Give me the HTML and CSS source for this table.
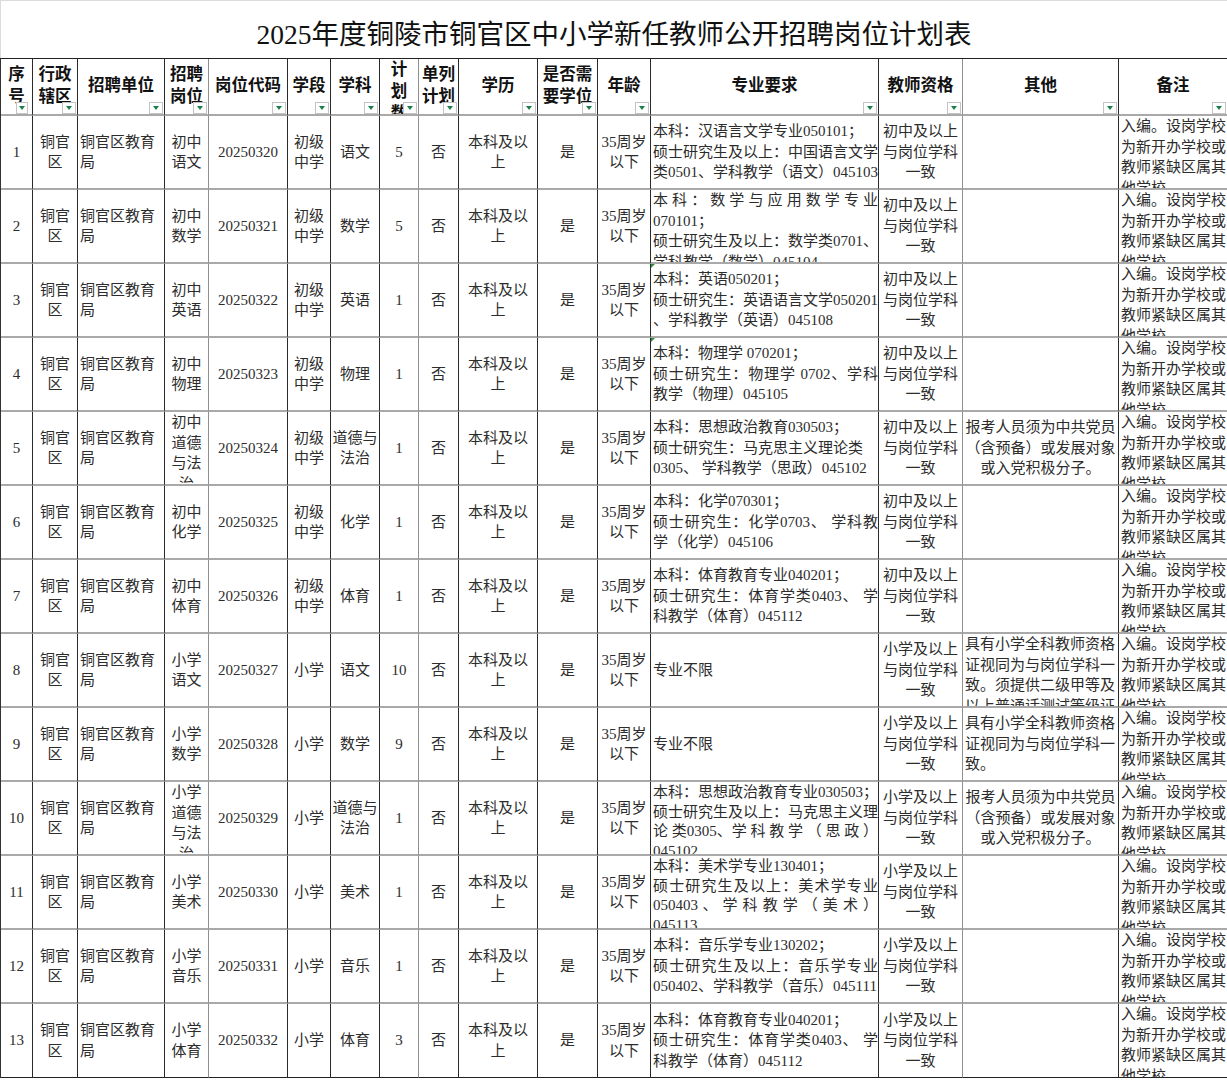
FILE: index.html
```html
<!DOCTYPE html>
<html lang="zh-CN">
<head>
<meta charset="utf-8">
<title>2025年度铜陵市铜官区中小学新任教师公开招聘岗位计划表</title>
<link rel="stylesheet" href="styles.css">
</head>
<body>
<div class="sheet">
  <div class="title">2025年度铜陵市铜官区中小学新任教师公开招聘岗位计划表</div>
  <div class="grid">
    <div class="h"><span>序<br>号</span><i class="dd dd-narrow"></i></div>
    <div class="h"><span>行政<br>辖区</span><i class="dd"></i></div>
    <div class="h"><span>招聘单位</span><i class="dd"></i></div>
    <div class="h"><span>招聘<br>岗位</span><i class="dd"></i></div>
    <div class="h"><span>岗位代码</span><i class="dd"></i></div>
    <div class="h"><span>学段</span><i class="dd"></i></div>
    <div class="h"><span>学科</span><i class="dd"></i></div>
    <div class="h t"><span>计<br>划<br>数</span><i class="dd"></i></div>
    <div class="h"><span>单列<br>计划</span><i class="dd"></i></div>
    <div class="h"><span>学历</span><i class="dd"></i></div>
    <div class="h"><span>是否需<br>要学位</span><i class="dd"></i></div>
    <div class="h"><span>年龄</span><i class="dd"></i></div>
    <div class="h"><span>专业要求</span><i class="dd"></i></div>
    <div class="h"><span>教师资格</span><i class="dd"></i></div>
    <div class="h"><span>其他</span><i class="dd"></i></div>
    <div class="h"><span>备注</span><i class="dd"></i></div>

    <!-- 1 -->
    <div class="c"><span>1</span></div>
    <div class="c"><span>铜官<br>区</span></div>
    <div class="c l"><span>铜官区教育<br>局</span></div>
    <div class="c"><span>初中<br>语文</span></div>
    <div class="c"><span>20250320</span></div>
    <div class="c"><span>初级<br>中学</span></div>
    <div class="c"><span>语文</span></div>
    <div class="c"><span>5</span></div>
    <div class="c"><span>否</span></div>
    <div class="c"><span>本科及以<br>上</span></div>
    <div class="c"><span>是</span></div>
    <div class="c"><span>35周岁<br>以下</span></div>
    <div class="c l"><span><b>本科：汉语言文学专业050101；</b><b>硕士研究生及以上：中国语言文学</b><b>类0501、学科教学（语文）045103</b></span></div>
    <div class="c"><span>初中及以上<br>与岗位学科<br>一致</span></div>
    <div class="c l"><span></span></div>
    <div class="c l t"><span>入编。设岗学校<br>为新开办学校或<br>教师紧缺区属其<br>他学校。</span></div>

    <!-- 2 -->
    <div class="c"><span>2</span></div>
    <div class="c"><span>铜官<br>区</span></div>
    <div class="c l"><span>铜官区教育<br>局</span></div>
    <div class="c"><span>初中<br>数学</span></div>
    <div class="c"><span>20250321</span></div>
    <div class="c"><span>初级<br>中学</span></div>
    <div class="c"><span>数学</span></div>
    <div class="c"><span>5</span></div>
    <div class="c"><span>否</span></div>
    <div class="c"><span>本科及以<br>上</span></div>
    <div class="c"><span>是</span></div>
    <div class="c"><span>35周岁<br>以下</span></div>
    <div class="c l t"><span><b class="j">本科：数学与应用数学专业</b><b>070101；</b><b>硕士研究生及以上：数学类0701、</b><b>学科教学（数学）045104</b></span></div>
    <div class="c"><span>初中及以上<br>与岗位学科<br>一致</span></div>
    <div class="c l"><span></span></div>
    <div class="c l t"><span>入编。设岗学校<br>为新开办学校或<br>教师紧缺区属其<br>他学校。</span></div>

    <!-- 3 -->
    <div class="c"><span>3</span></div>
    <div class="c"><span>铜官<br>区</span></div>
    <div class="c l"><span>铜官区教育<br>局</span></div>
    <div class="c"><span>初中<br>英语</span></div>
    <div class="c"><span>20250322</span></div>
    <div class="c"><span>初级<br>中学</span></div>
    <div class="c"><span>英语</span></div>
    <div class="c"><span>1</span></div>
    <div class="c"><span>否</span></div>
    <div class="c"><span>本科及以<br>上</span></div>
    <div class="c"><span>是</span></div>
    <div class="c"><span>35周岁<br>以下</span></div>
    <div class="c l flag"><span><b>本科：英语050201；</b><b>硕士研究生：英语语言文学050201</b><b>、学科教学（英语）045108</b></span></div>
    <div class="c"><span>初中及以上<br>与岗位学科<br>一致</span></div>
    <div class="c l"><span></span></div>
    <div class="c l t"><span>入编。设岗学校<br>为新开办学校或<br>教师紧缺区属其<br>他学校。</span></div>

    <!-- 4 -->
    <div class="c"><span>4</span></div>
    <div class="c"><span>铜官<br>区</span></div>
    <div class="c l"><span>铜官区教育<br>局</span></div>
    <div class="c"><span>初中<br>物理</span></div>
    <div class="c"><span>20250323</span></div>
    <div class="c"><span>初级<br>中学</span></div>
    <div class="c"><span>物理</span></div>
    <div class="c"><span>1</span></div>
    <div class="c"><span>否</span></div>
    <div class="c"><span>本科及以<br>上</span></div>
    <div class="c"><span>是</span></div>
    <div class="c"><span>35周岁<br>以下</span></div>
    <div class="c l flag"><span><b>本科：物理学 070201；</b><b class="j">硕士研究生：物理学 0702、学科</b><b>教学（物理）045105</b></span></div>
    <div class="c"><span>初中及以上<br>与岗位学科<br>一致</span></div>
    <div class="c l"><span></span></div>
    <div class="c l t"><span>入编。设岗学校<br>为新开办学校或<br>教师紧缺区属其<br>他学校。</span></div>

    <!-- 5 -->
    <div class="c"><span>5</span></div>
    <div class="c"><span>铜官<br>区</span></div>
    <div class="c l"><span>铜官区教育<br>局</span></div>
    <div class="c t"><span>初中<br>道德<br>与法<br>治</span></div>
    <div class="c"><span>20250324</span></div>
    <div class="c"><span>初级<br>中学</span></div>
    <div class="c"><span>道德与<br>法治</span></div>
    <div class="c"><span>1</span></div>
    <div class="c"><span>否</span></div>
    <div class="c"><span>本科及以<br>上</span></div>
    <div class="c"><span>是</span></div>
    <div class="c"><span>35周岁<br>以下</span></div>
    <div class="c l"><span><b>本科：思想政治教育030503；</b><b>硕士研究生：马克思主义理论类</b><b>0305、 学科教学（思政）045102</b></span></div>
    <div class="c"><span>初中及以上<br>与岗位学科<br>一致</span></div>
    <div class="c"><span>报考人员须为中共党员<br>（含预备）或发展对象<br>或入党积极分子。</span></div>
    <div class="c l t"><span>入编。设岗学校<br>为新开办学校或<br>教师紧缺区属其<br>他学校。</span></div>

    <!-- 6 -->
    <div class="c"><span>6</span></div>
    <div class="c"><span>铜官<br>区</span></div>
    <div class="c l"><span>铜官区教育<br>局</span></div>
    <div class="c"><span>初中<br>化学</span></div>
    <div class="c"><span>20250325</span></div>
    <div class="c"><span>初级<br>中学</span></div>
    <div class="c"><span>化学</span></div>
    <div class="c"><span>1</span></div>
    <div class="c"><span>否</span></div>
    <div class="c"><span>本科及以<br>上</span></div>
    <div class="c"><span>是</span></div>
    <div class="c"><span>35周岁<br>以下</span></div>
    <div class="c l"><span><b>本科：化学070301；</b><b class="j">硕士研究生：化学0703、 学科教</b><b>学（化学）045106</b></span></div>
    <div class="c"><span>初中及以上<br>与岗位学科<br>一致</span></div>
    <div class="c l"><span></span></div>
    <div class="c l t"><span>入编。设岗学校<br>为新开办学校或<br>教师紧缺区属其<br>他学校。</span></div>

    <!-- 7 -->
    <div class="c"><span>7</span></div>
    <div class="c"><span>铜官<br>区</span></div>
    <div class="c l"><span>铜官区教育<br>局</span></div>
    <div class="c"><span>初中<br>体育</span></div>
    <div class="c"><span>20250326</span></div>
    <div class="c"><span>初级<br>中学</span></div>
    <div class="c"><span>体育</span></div>
    <div class="c"><span>1</span></div>
    <div class="c"><span>否</span></div>
    <div class="c"><span>本科及以<br>上</span></div>
    <div class="c"><span>是</span></div>
    <div class="c"><span>35周岁<br>以下</span></div>
    <div class="c l"><span><b>本科：体育教育专业040201；</b><b class="j">硕士研究生：体育学类0403、 学</b><b>科教学（体育）045112</b></span></div>
    <div class="c"><span>初中及以上<br>与岗位学科<br>一致</span></div>
    <div class="c l"><span></span></div>
    <div class="c l t"><span>入编。设岗学校<br>为新开办学校或<br>教师紧缺区属其<br>他学校。</span></div>

    <!-- 8 -->
    <div class="c"><span>8</span></div>
    <div class="c"><span>铜官<br>区</span></div>
    <div class="c l"><span>铜官区教育<br>局</span></div>
    <div class="c"><span>小学<br>语文</span></div>
    <div class="c"><span>20250327</span></div>
    <div class="c"><span>小学</span></div>
    <div class="c"><span>语文</span></div>
    <div class="c"><span>10</span></div>
    <div class="c"><span>否</span></div>
    <div class="c"><span>本科及以<br>上</span></div>
    <div class="c"><span>是</span></div>
    <div class="c"><span>35周岁<br>以下</span></div>
    <div class="c l"><span>专业不限</span></div>
    <div class="c"><span>小学及以上<br>与岗位学科<br>一致</span></div>
    <div class="c l t"><span>具有小学全科教师资格<br>证视同为与岗位学科一<br>致。须提供二级甲等及<br>以上普通话测试等级证</span></div>
    <div class="c l t"><span>入编。设岗学校<br>为新开办学校或<br>教师紧缺区属其<br>他学校。</span></div>

    <!-- 9 -->
    <div class="c"><span>9</span></div>
    <div class="c"><span>铜官<br>区</span></div>
    <div class="c l"><span>铜官区教育<br>局</span></div>
    <div class="c"><span>小学<br>数学</span></div>
    <div class="c"><span>20250328</span></div>
    <div class="c"><span>小学</span></div>
    <div class="c"><span>数学</span></div>
    <div class="c"><span>9</span></div>
    <div class="c"><span>否</span></div>
    <div class="c"><span>本科及以<br>上</span></div>
    <div class="c"><span>是</span></div>
    <div class="c"><span>35周岁<br>以下</span></div>
    <div class="c l"><span>专业不限</span></div>
    <div class="c"><span>小学及以上<br>与岗位学科<br>一致</span></div>
    <div class="c l"><span>具有小学全科教师资格<br>证视同为与岗位学科一<br>致。</span></div>
    <div class="c l t"><span>入编。设岗学校<br>为新开办学校或<br>教师紧缺区属其<br>他学校。</span></div>

    <!-- 10 -->
    <div class="c"><span>10</span></div>
    <div class="c"><span>铜官<br>区</span></div>
    <div class="c l"><span>铜官区教育<br>局</span></div>
    <div class="c t"><span>小学<br>道德<br>与法<br>治</span></div>
    <div class="c"><span>20250329</span></div>
    <div class="c"><span>小学</span></div>
    <div class="c"><span>道德与<br>法治</span></div>
    <div class="c"><span>1</span></div>
    <div class="c"><span>否</span></div>
    <div class="c"><span>本科及以<br>上</span></div>
    <div class="c"><span>是</span></div>
    <div class="c"><span>35周岁<br>以下</span></div>
    <div class="c l t tight"><span><b>本科：思想政治教育专业030503；</b><b>硕士研究生及以上：马克思主义理</b><b class="j">论 类0305、学 科 教 学 （ 思 政 ）</b><b>045102</b></span></div>
    <div class="c"><span>小学及以上<br>与岗位学科<br>一致</span></div>
    <div class="c"><span>报考人员须为中共党员<br>（含预备）或发展对象<br>或入党积极分子。</span></div>
    <div class="c l t"><span>入编。设岗学校<br>为新开办学校或<br>教师紧缺区属其<br>他学校。</span></div>

    <!-- 11 -->
    <div class="c"><span>11</span></div>
    <div class="c"><span>铜官<br>区</span></div>
    <div class="c l"><span>铜官区教育<br>局</span></div>
    <div class="c"><span>小学<br>美术</span></div>
    <div class="c"><span>20250330</span></div>
    <div class="c"><span>小学</span></div>
    <div class="c"><span>美术</span></div>
    <div class="c"><span>1</span></div>
    <div class="c"><span>否</span></div>
    <div class="c"><span>本科及以<br>上</span></div>
    <div class="c"><span>是</span></div>
    <div class="c"><span>35周岁<br>以下</span></div>
    <div class="c l t tight"><span><b>本科：美术学专业130401；</b><b class="j">硕士研究生及以上：美术学专业</b><b class="j">050403 、 学 科 教 学 （ 美 术 ）</b><b>045113</b></span></div>
    <div class="c"><span>小学及以上<br>与岗位学科<br>一致</span></div>
    <div class="c l"><span></span></div>
    <div class="c l t"><span>入编。设岗学校<br>为新开办学校或<br>教师紧缺区属其<br>他学校。</span></div>

    <!-- 12 -->
    <div class="c"><span>12</span></div>
    <div class="c"><span>铜官<br>区</span></div>
    <div class="c l"><span>铜官区教育<br>局</span></div>
    <div class="c"><span>小学<br>音乐</span></div>
    <div class="c"><span>20250331</span></div>
    <div class="c"><span>小学</span></div>
    <div class="c"><span>音乐</span></div>
    <div class="c"><span>1</span></div>
    <div class="c"><span>否</span></div>
    <div class="c"><span>本科及以<br>上</span></div>
    <div class="c"><span>是</span></div>
    <div class="c"><span>35周岁<br>以下</span></div>
    <div class="c l"><span><b>本科：音乐学专业130202；</b><b class="j">硕士研究生及以上：音乐学专业</b><b>050402、学科教学（音乐）045111</b></span></div>
    <div class="c"><span>小学及以上<br>与岗位学科<br>一致</span></div>
    <div class="c l"><span></span></div>
    <div class="c l t"><span>入编。设岗学校<br>为新开办学校或<br>教师紧缺区属其<br>他学校。</span></div>

    <!-- 13 -->
    <div class="c last"><span>13</span></div>
    <div class="c last"><span>铜官<br>区</span></div>
    <div class="c l last"><span>铜官区教育<br>局</span></div>
    <div class="c last"><span>小学<br>体育</span></div>
    <div class="c last"><span>20250332</span></div>
    <div class="c last"><span>小学</span></div>
    <div class="c last"><span>体育</span></div>
    <div class="c last"><span>3</span></div>
    <div class="c last"><span>否</span></div>
    <div class="c last"><span>本科及以<br>上</span></div>
    <div class="c last"><span>是</span></div>
    <div class="c last"><span>35周岁<br>以下</span></div>
    <div class="c l last"><span><b>本科：体育教育专业040201；</b><b class="j">硕士研究生：体育学类0403、 学</b><b>科教学（体育）045112</b></span></div>
    <div class="c last"><span>小学及以上<br>与岗位学科<br>一致</span></div>
    <div class="c l last"><span></span></div>
    <div class="c l t last"><span>入编。设岗学校<br>为新开办学校或<br>教师紧缺区属其<br>他学校。</span></div>
  </div>
</div>
</body>
</html>
```

FILE: styles.css
```css
* {
  box-sizing: border-box;
}

html,
body {
  margin: 0;
  padding: 0;
  background: #ffffff;
}

body {
  width: 1227px;
  height: 1080px;
  overflow: hidden;
  font-family: "Liberation Serif", "Noto Sans CJK SC", serif;
  color: #2c2c2c;
}

.sheet {
  width: 1228px;
}

.title {
  height: 58px;
  border-top: 1px solid #dcdcdc;
  border-left: 1px solid #dcdcdc;
  border-right: 1px solid #dcdcdc;
  display: flex;
  align-items: center;
  justify-content: center;
  padding-top: 4px;
  font-size: 27.5px;
  color: #111111;
  white-space: nowrap;
}

.grid {
  display: grid;
  grid-template-columns: 32px 45px 87px 44px 79px 43px 49px 39px 40px 79px 60px 53px 228px 84px 156px 109px;
  grid-template-rows: 57px;
  grid-auto-rows: 74px;
  border-top: 1px solid #222222;
  border-left: 1px solid #333333;
}

.grid > div {
  border-right: 1px solid #2a2a2a;
  border-bottom: 2px solid #a9a9a9;
  overflow: hidden;
  display: flex;
  align-items: center;
  justify-content: center;
  text-align: center;
  white-space: nowrap;
}

.grid > div:nth-child(16n+4),
.grid > div:nth-child(16n+8),
.grid > div:nth-child(16n+14) {
  border-right-color: #8f8f8f;
}

/* header cells */
.h {
  position: relative;
  font-weight: 700;
  font-size: 16.5px;
  line-height: 22px;
  color: #111111;
  padding-bottom: 2px;
}

.h.t {
  align-items: flex-start;
  padding-bottom: 0;
}

.dd {
  position: absolute;
  right: 1px;
  bottom: 0;
  width: 14px;
  height: 12px;
  background: #ffffff;
  border: 1px solid #c4c4c4;
}

.dd-narrow {
  width: 12px;
  right: 4px;
}

.dd::after {
  content: "";
  position: absolute;
  left: 50%;
  top: 50%;
  margin-left: -3.5px;
  margin-top: -2px;
  border-left: 3.5px solid transparent;
  border-right: 3.5px solid transparent;
  border-top: 4px solid #1d7f48;
}

/* body cells */
.c {
  font-size: 15px;
  line-height: 20.5px;
  padding: 0 1px;
}

.c.l {
  justify-content: flex-start;
  text-align: left;
  padding: 0 0 0 2px;
}

.c.l > span {
  width: 100%;
}

.c.t {
  align-items: flex-start;
}

.c.tight {
  line-height: 19.5px;
}

.c.tight > span {
  margin-top: 1px;
}

.c b {
  display: block;
  font-weight: 400;
}

.c b.j {
  text-align: justify;
  text-align-last: justify;
}

.grid > .last {
  border-bottom: 1px solid #222222;
}

.flag {
  position: relative;
}

.flag::before {
  content: "";
  position: absolute;
  left: 0;
  top: 0;
  border-top: 4px solid #2a8a3a;
  border-right: 4px solid transparent;
}
```
